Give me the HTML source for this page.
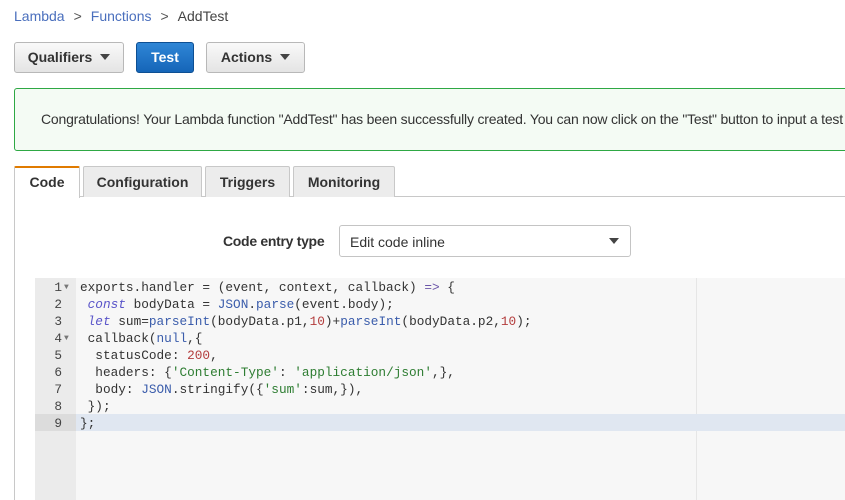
<!DOCTYPE html>
<html><head><meta charset="utf-8"><style>
*{box-sizing:border-box;margin:0;padding:0}
html,body{width:845px;height:500px;overflow:hidden}
body{background:#fff;font-family:"Liberation Sans",Arial,sans-serif;color:#333;position:relative}
.abs{position:absolute}
.bc{left:14px;top:8px;font-size:14px;color:#444}
.bc a{color:#4a6fbd;text-decoration:none}
.bc .sep{color:#555;margin:0 9px}
.btn{top:42px;height:31px;border:1px solid #b8b8b8;border-radius:3px;background:linear-gradient(#f9f9f9,#e4e4e4);font-weight:bold;font-size:14px;color:#333;line-height:29px;text-align:center}
.caret{display:inline-block;width:0;height:0;border-left:5px solid transparent;border-right:5px solid transparent;border-top:6px solid #444;vertical-align:middle;margin-left:8px;margin-top:-2px}
.test{background:linear-gradient(#2f86d6,#1565b8);border-color:#0d4f93;color:#fff}
.okw{left:14px;top:88px;width:831px;height:63px;overflow:hidden}
.ok{width:900px;height:63px;border:1px solid #2ea844;border-radius:3px;background:#f4fbf4;font-size:14px;letter-spacing:-0.2px;color:#333;padding:22px 0 0 26px;white-space:nowrap}
.tab{top:166px;height:31px;border:1px solid #c8c8c8;border-bottom:none;background:#ececec;font-weight:bold;font-size:14px;color:#333;text-align:center;line-height:30px;border-radius:2px 2px 0 0}
.tab.on{background:#fff;border-top:2px solid #e07b00;height:32px;line-height:28px}
.line{left:79px;top:196px;width:766px;height:1px;background:#c8c8c8}
.vl{left:14px;top:197px;width:1px;height:303px;background:#c8c8c8}
.lbl{left:223px;top:233px;font-weight:bold;font-size:14px;color:#333;letter-spacing:-0.3px}
.sel{left:339px;top:225px;width:292px;height:32px;border:1px solid #c4c4c4;border-radius:3px;font-size:14px;color:#333;padding:8px 0 0 10px}
.sel .caret{position:absolute;right:11px;top:14px}
.ed{left:35px;top:278px;width:810px;height:222px;background:#f7f7f7}
.gut{left:35px;top:278px;width:41px;height:222px;background:#ebebeb}
.act{left:76px;top:414px;width:769px;height:17px;background:#e0e7f1}
.actg{left:35px;top:414px;width:41px;height:17px;background:#dcdcdc}
.pm{left:696px;top:278px;width:1px;height:222px;background:#e6e6e6}
.code{left:0;top:279px;font-family:"Liberation Mono",monospace;font-size:12.75px;line-height:17px;color:#333}
.code div{height:17px;white-space:pre}
.n{display:inline-block;width:62px;text-align:right;color:#444}
.f{display:inline-block;width:18px;color:#777;font-size:8px;text-align:left;padding-left:2px;vertical-align:top}
.k{color:#5a55c9;font-style:italic}
.b{color:#3a5cab}
.num{color:#b33c3c}
.s{color:#2e7d32}
.o{color:#6b55a8}
</style></head><body>
<div class="abs bc"><a>Lambda</a><span class="sep">&gt;</span><a>Functions</a><span class="sep">&gt;</span>AddTest</div>
<div class="abs btn" style="left:14px;width:110px">Qualifiers<span class="caret"></span></div>
<div class="abs btn test" style="left:136px;width:58px">Test</div>
<div class="abs btn" style="left:206px;width:99px">Actions<span class="caret"></span></div>
<div class="abs okw"><div class="ok">Congratulations! Your Lambda function "AddTest" has been successfully created. You can now click on the "Test" button to input a test event.</div></div>
<div class="abs line"></div>
<div class="abs vl"></div>
<div class="abs tab on" style="left:14px;width:66px">Code</div>
<div class="abs tab" style="left:83px;width:119px">Configuration</div>
<div class="abs tab" style="left:205px;width:85px">Triggers</div>
<div class="abs tab" style="left:293px;width:102px">Monitoring</div>
<div class="abs lbl">Code entry type</div>
<div class="abs sel">Edit code inline<span class="caret"></span></div>
<div class="abs ed"></div>
<div class="abs gut"></div>
<div class="abs pm"></div>
<div class="abs act"></div>
<div class="abs actg"></div>
<div class="abs code"><div><span class="n">1</span><span class="f">▼</span>exports.handler = (event, context, callback) <span class="o">=&gt;</span> {</div><div><span class="n">2</span><span class="f"></span> <span class="k">const</span> bodyData = <span class="b">JSON</span>.<span class="b">parse</span>(event.body);</div><div><span class="n">3</span><span class="f"></span> <span class="k">let</span> sum=<span class="b">parseInt</span>(bodyData.p1,<span class="num">10</span>)+<span class="b">parseInt</span>(bodyData.p2,<span class="num">10</span>);</div><div><span class="n">4</span><span class="f">▼</span> callback(<span class="b">null</span>,{</div><div><span class="n">5</span><span class="f"></span>  statusCode: <span class="num">200</span>,</div><div><span class="n">6</span><span class="f"></span>  headers: {<span class="s">'Content-Type'</span>: <span class="s">'application/json'</span>,},</div><div><span class="n">7</span><span class="f"></span>  body: <span class="b">JSON</span>.stringify({<span class="s">'sum'</span>:sum,}),</div><div><span class="n">8</span><span class="f"></span> });</div><div><span class="n">9</span><span class="f"></span>};</div></div>
</body></html>
